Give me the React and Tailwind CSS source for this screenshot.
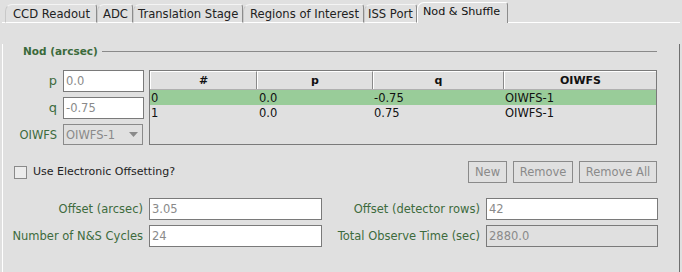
const tabs = [
  { label: "CCD Readout", w: "w-[92px]", pl: "pl-[7px]" },
  { label: "ADC", w: "w-[36px]", pl: "pl-[5px]" },
  { label: "Translation Stage", w: "w-[110px]", pl: "pl-[4px]" },
  { label: "Regions of Interest", w: "w-[121px]", pl: "pl-[6px]" },
  { label: "ISS Port", w: "w-[53px]", pl: "pl-[3px]" },
];

const rows = [
  { n: "0", p: "0.0", q: "-0.75", oiwfs: "OIWFS-1", selected: true },
  { n: "1", p: "0.0", q: "0.75", oiwfs: "OIWFS-1", selected: false },
];

const TextField = ({ value, width, disabled }) => (
  <div
    className={`${width} h-[22px] border border-[#7a7a7a] ${
      disabled ? "bg-[#e0e0e0]" : "bg-white"
    } text-[#8a8a8a] text-[11.5px] pl-[2px] flex items-center`}
  >
    {value}
  </div>
);

const Button = ({ label, width }) => (
  <div
    className={`${width} h-[22px] border border-[#8a8a8a] text-[#8a8a8a] text-[11.5px] flex items-center justify-center`}
  >
    {label}
  </div>
);

const App = () => {
  return (
    <div className="w-[682px] h-[272px] overflow-hidden bg-[#e0e0e0] font-['DejaVu_Sans',sans-serif] text-[11px] leading-[14px] text-black">
      {/* tab strip */}
      <div className="flex items-end h-[23px] pl-[2px]">
        <div className="w-[3px] h-px bg-white" />
        {tabs.map((t) => (
          <div
            key={t.label}
            className={`${t.w} ${t.pl} h-[19px] border-t border-l border-r border-b border-t-[#f4f4f4] border-l-[#c8c8c8] border-r-[#8c8c8c] border-b-white rounded-tl-[7px] rounded-tr-[3px] flex items-center text-[11.6px] text-[#222] whitespace-nowrap`}
          >
            {t.label}
          </div>
        ))}
        <div className="w-[91px] h-[21px] border-t border-l border-r border-t-white border-l-white border-r-[#8c8c8c] rounded-tl-[7px] rounded-tr-[3px] flex items-center pl-[5px] pb-[2px] text-[11.2px] text-[#111] whitespace-nowrap">
          Nod &amp; Shuffle
        </div>
        <div className="w-[172px] h-px bg-white" />
      </div>

      {/* panel */}
      <div className="ml-[2px] w-[678px] h-[249px] border-l border-r border-l-white border-r-[#6f6f6f]">
        {/* titled separator */}
        <div className="mt-[21px] h-[14px] flex items-center pl-[20px] pr-[22px]">
          <span className="font-bold text-[#3b6a3b] text-[10.5px] whitespace-nowrap">
            Nod (arcsec)
          </span>
          <div className="ml-[4px] flex-1 h-px bg-[#8a8a8a]" />
        </div>

        {/* nod editor + table */}
        <div className="mt-[12px] flex">
          <div className="flex flex-col gap-[5px]">
            <div className="flex items-center">
              <div className="w-[54px] text-right text-[#3d6b3d] text-[13px]">p</div>
              <div className="ml-[6px]">
                <TextField value="0.0" width="w-[81px]" />
              </div>
            </div>
            <div className="flex items-center">
              <div className="w-[54px] text-right text-[#3d6b3d] text-[13px]">q</div>
              <div className="ml-[6px]">
                <TextField value="-0.75" width="w-[81px]" />
              </div>
            </div>
            <div className="flex items-center">
              <div className="w-[54px] text-right text-[#3d6b3d] text-[11.5px]">OIWFS</div>
              <div className="ml-[6px] w-[80px] h-[21px] border border-[#8a8a8a] text-[#8a8a8a] text-[11.5px] pl-[2px] flex items-center">
                <span className="flex-1">OIWFS-1</span>
                <svg width="9" height="5" viewBox="0 0 9 5" className="mr-[4px]">
                  <path d="M0 0 H9 L4.5 5 Z" fill="#8a8a8a" />
                </svg>
              </div>
            </div>
          </div>

          <div className="ml-[5px] w-[508px] h-[75px] border border-[#7a7a7a] text-[11.5px]">
            <div className="flex h-[19px] border-b border-[#b0b0b0] font-bold text-[11px] text-[#111]">
              {[
                ["#", "w-[107px]"],
                ["p", "w-[116px]"],
                ["q", "w-[131px]"],
                ["OIWFS", "w-[152px]"],
              ].map(([h, w], i) => (
                <div
                  key={h}
                  className={`${w} flex items-center justify-center border-t border-l border-t-white border-l-white ${
                    i < 3 ? "border-r border-r-[#8a8a8a]" : ""
                  }`}
                >
                  {h}
                </div>
              ))}
            </div>
            {rows.map((r) => (
              <div
                key={r.n}
                className={`flex h-[15px] items-center ${
                  r.selected ? "bg-[#99cc99]" : ""
                } text-[#111]`}
              >
                <div className="w-[107px] pl-[1px]">{r.n}</div>
                <div className="w-[116px] pl-[1px] border-l border-l-transparent">{r.p}</div>
                <div className="w-[131px] pl-[1px]">{r.q}</div>
                <div className="w-[152px] pl-[1px]">{r.oiwfs}</div>
              </div>
            ))}
          </div>
        </div>

        {/* checkbox + buttons */}
        <div className="mt-[16px] h-[22px] flex items-center pl-[11px] pr-[22px]">
          <div className="w-[13px] h-[13px] border border-[#8a8a8a] bg-[#ececec]" />
          <span className="ml-[6px] text-[#222]">Use Electronic Offsetting?</span>
          <div className="ml-auto flex gap-[6px]">
            <Button label="New" width="w-[39px]" />
            <Button label="Remove" width="w-[60px]" />
            <Button label="Remove All" width="w-[78px]" />
          </div>
        </div>

        {/* offsets */}
        <div className="mt-[15px] flex flex-col gap-[5px] text-[11.5px]">
          <div className="flex items-center">
            <div className="w-[140px] text-right text-[#3d6b3d]">Offset (arcsec)</div>
            <div className="ml-[6px]">
              <TextField value="3.05" width="w-[173px]" />
            </div>
            <div className="w-[158px] text-right text-[#3d6b3d]">Offset (detector rows)</div>
            <div className="ml-[6px]">
              <TextField value="42" width="w-[172px]" />
            </div>
          </div>
          <div className="flex items-center">
            <div className="w-[140px] text-right text-[#3d6b3d]">Number of N&amp;S Cycles</div>
            <div className="ml-[6px]">
              <TextField value="24" width="w-[173px]" />
            </div>
            <div className="w-[158px] text-right text-[#3d6b3d]">Total Observe Time (sec)</div>
            <div className="ml-[6px]">
              <TextField value="2880.0" width="w-[172px]" disabled />
            </div>
          </div>
        </div>
      </div>
    </div>
  );
};

export default App;
